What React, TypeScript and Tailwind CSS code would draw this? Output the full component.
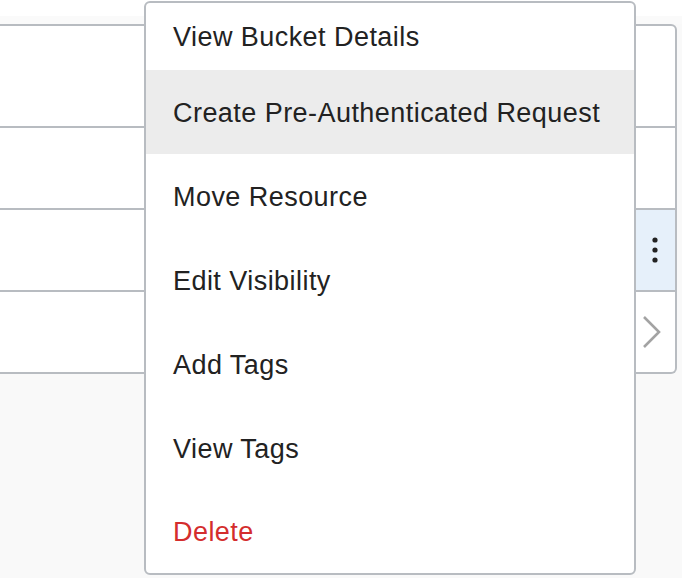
import React from "react";

const items = [
  { label: "View Bucket Details", h: "h-[67px]" },
  { label: "Create Pre-Authenticated Request", h: "h-[84px]", active: true },
  { label: "Move Resource", h: "h-[84px]" },
  { label: "Edit Visibility", h: "h-[84px]" },
  { label: "Add Tags", h: "h-[84px]" },
  { label: "View Tags", h: "h-[84px]" },
  { label: "Delete", h: "h-[83px]", danger: true },
];

const Kebab = () => (
  <svg width="6" height="26" viewBox="0 0 6 26">
    <circle cx="3" cy="3" r="2.6" fill="#222" />
    <circle cx="3" cy="13" r="2.6" fill="#222" />
    <circle cx="3" cy="23" r="2.6" fill="#222" />
  </svg>
);

const Chevron = () => (
  <svg width="20" height="34" viewBox="0 0 20 34">
    <path d="M2 2 L17 17 L2 32" fill="none" stroke="#a3a3a3" strokeWidth="2.6" />
  </svg>
);

const Row = ({ h }: { h: string }) => (
  <div className={`flex ${h} border-b-2 border-[#b8bcc1]`}>
    <div className="flex-1 bg-white" />
    <div className="w-[41px]" />
  </div>
);

export default function App() {
  return (
    <div
      className="relative w-[682px] h-[578px] overflow-hidden bg-[#f9f9f9]"
      style={{ fontFamily: '"Liberation Sans", Arial, sans-serif' }}
    >
      <div className="h-[16px] bg-white" />
      <div className="h-[8px] bg-[#fafafa]" />
      <div className="w-[677px] bg-white border-2 border-l-0 border-[#b8bcc1] rounded-r-[6px] overflow-hidden">
        <Row h="h-[102px]" />
        <Row h="h-[82px]" />
        <div className="flex h-[82px] border-b-2 border-[#b8bcc1]">
          <div className="flex-1 bg-white" />
          <div className="w-[44px] bg-[#e6f0fa] flex items-center justify-center pl-[4px]">
            <Kebab />
          </div>
        </div>
        <div className="flex h-[80px]">
          <div className="flex-1 bg-white" />
          <div className="w-[41px] flex items-center justify-center pr-[6px]">
            <Chevron />
          </div>
        </div>
      </div>

      <div className="absolute left-[144px] top-[1px] w-[492px] h-[574px] bg-white border-2 border-[#b8bcc1] rounded-[6px] overflow-hidden flex flex-col">
        {items.map((it) => (
          <div
            key={it.label}
            className={`${it.h} flex items-center pl-[27px] pt-[2px] text-[27px] tracking-[0.45px] ${
              it.active ? "bg-[#ececec]" : ""
            } ${it.danger ? "text-[#d42d2d]" : "text-[#222222]"}`}
          >
            {it.label}
          </div>
        ))}
      </div>
    </div>
  );
}
